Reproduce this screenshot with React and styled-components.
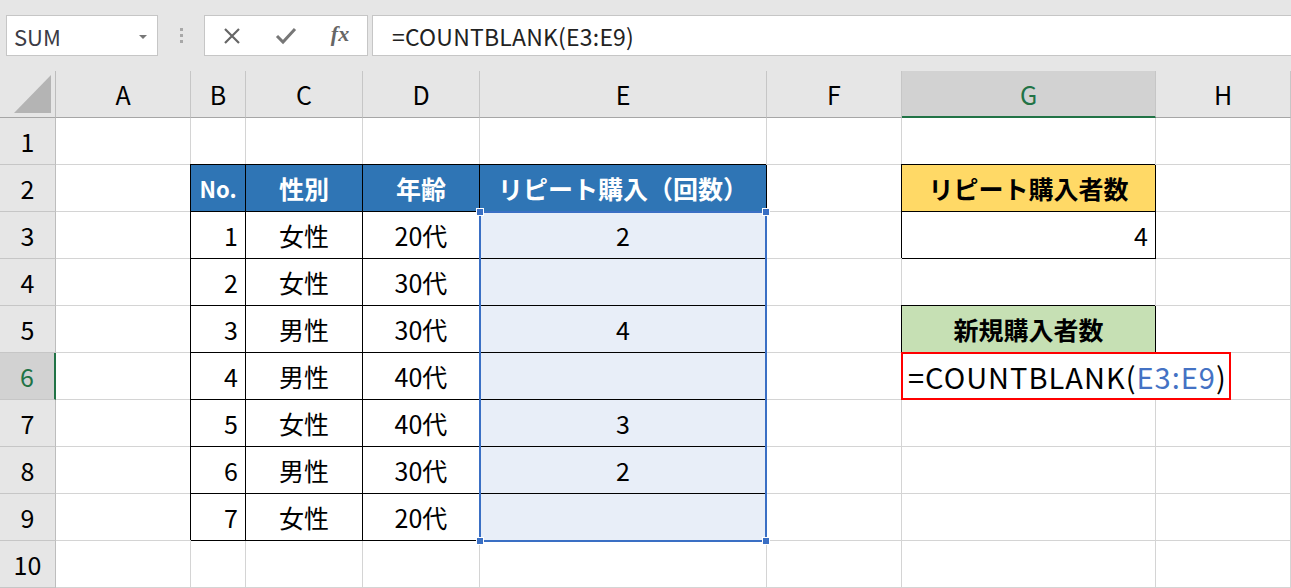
import React from "react";
import styled, { createGlobalStyle, css } from "styled-components";

const GlobalStyle = createGlobalStyle`
  html, body {
    margin: 0;
    padding: 0;
    background: #fff;
    overflow: hidden;
  }
  body {
    font-family: "Noto Sans CJK JP", "Noto Sans", sans-serif;
    color: #000;
  }
`;

const Page = styled.div`
  width: 1291px;
  height: 588px;
  overflow: hidden;
`;

const Toolbar = styled.div`
  height: 71px;
  background: #e6e6e6;
  display: flex;
  align-items: center;
  padding-left: 6px;
  box-sizing: border-box;
`;

const Field = styled.div`
  height: 41px;
  box-sizing: border-box;
  background: #fff;
  border: 1px solid #c6c6c6;
  display: flex;
  align-items: center;
`;

const NameBox = styled(Field)`
  width: 152px;
  padding: 0 10px 0 7px;
  justify-content: space-between;
  font-size: 22px;
  color: #3b3b45;
`;

const Caret = styled.span`
  width: 0;
  height: 0;
  border-left: 4px solid transparent;
  border-right: 4px solid transparent;
  border-top: 4px solid #777;
  margin-top: 2px;
`;

const Grip = styled.div`
  width: 46px;
  display: flex;
  flex-direction: column;
  align-items: center;
  gap: 3px;
  span {
    width: 3px;
    height: 3px;
    background: #a8a8a8;
  }
`;

const Buttons = styled(Field)`
  width: 164px;
  color: #666;
`;

const Slot = styled.div`
  width: 54px;
  display: flex;
  justify-content: center;
  align-items: center;
`;

const Fx = styled.span`
  font-family: "Liberation Serif", serif;
  font-style: italic;
  font-weight: bold;
  font-size: 22px;
  color: #666;
  margin-top: -3px;
`;

const FormulaBar = styled(Field)`
  flex: 1;
  margin-left: 4px;
  padding-left: 19px;
  font-size: 23px;
  letter-spacing: 0.2px;
  color: #222;
  border-right: none;
`;

const Sheet = styled.div`
  display: grid;
  grid-template-columns: 56px 135px 55px 117px 117px 287px 135px 254px 1fr;
  grid-auto-rows: 47px;
`;

const Base = styled.div`
  box-sizing: border-box;
  border-right: 1px solid #d4d4d4;
  border-bottom: 1px solid #d4d4d4;
  display: flex;
  align-items: center;
  font-size: 25px;
  white-space: nowrap;
`;

const Corner = styled(Base)`
  background: #e6e6e6;
  border-right-color: #bdbdbd;
  border-bottom-color: #a6a6a6;
  position: relative;
  &::after {
    content: "";
    position: absolute;
    left: 14px;
    top: 4px;
    right: 4px;
    bottom: 4px;
    background: #b4b4b4;
    clip-path: polygon(100% 0, 100% 100%, 0 100%);
  }
`;

const ColHead = styled(Base)`
  background: ${(p) => (p.$active ? "#d2d2d2" : "#e6e6e6")};
  border-right-color: #c6c6c6;
  border-bottom: ${(p) => (p.$active ? "2px solid #217346" : "1px solid #a6a6a6")};
  justify-content: center;
  color: ${(p) => (p.$active ? "#217346" : "#000")};
`;

const RowHead = styled(Base)`
  background: ${(p) => (p.$active ? "#d2d2d2" : "#e6e6e6")};
  border-right: ${(p) => (p.$active ? "2px solid #217346" : "1px solid #bdbdbd")};
  border-bottom-color: #c6c6c6;
  justify-content: center;
  color: ${(p) => (p.$active ? "#217346" : "#000")};
`;

const Cell = styled(Base)`
  justify-content: ${(p) =>
    p.$align === "right" ? "flex-end" : p.$align === "center" ? "center" : "flex-start"};
  padding: 0 7px;
  background: ${(p) => p.$fill || "transparent"};
  font-weight: ${(p) => (p.$bold ? 700 : 400)};
  font-size: ${(p) => p.$size || 25}px;
  color: ${(p) => p.$color || "#000"};
  ${(p) =>
    p.$boxed &&
    css`
      border-right-color: #000;
      border-bottom-color: #000;
      box-shadow: -1px -1px 0 #000;
    `}
  ${(p) =>
    p.$raised &&
    css`
      position: relative;
      z-index: 2;
    `}
`;

/* selection frame over E3:E9, hangs from the E3 cell */
const Selection = styled.div`
  position: absolute;
  left: -1px;
  top: -1px;
  width: 288px;
  height: ${47 * 7 + 2}px;
  box-sizing: border-box;
  border: 2px solid #3a6fc4;
  pointer-events: none;
`;

const Handle = styled.span`
  position: absolute;
  width: 6px;
  height: 6px;
  background: #3a6fc4;
  border: 1px solid #fff;
  ${(p) => (p.$top ? "top: -5px;" : "bottom: -5px;")}
  ${(p) => (p.$left ? "left: -5px;" : "right: -5px;")}
`;

/* in-cell editor of G6, spills over into H6 */
const Editor = styled.div`
  position: absolute;
  left: -1px;
  top: -1px;
  height: 48px;
  box-sizing: border-box;
  border: 2px solid #ff0000;
  background: #fff;
  display: flex;
  align-items: center;
  padding: 0 2px 0 5px;
  font-size: 29px;
  letter-spacing: 1px;
  white-space: nowrap;
`;

const Ref = styled.span`
  color: #4472c4;
`;

const columns = ["A", "B", "C", "D", "E", "F", "G", "H"];

const people = [
  [1, "女性", "20代", 2],
  [2, "女性", "30代", ""],
  [3, "男性", "30代", 4],
  [4, "男性", "40代", ""],
  [5, "女性", "40代", 3],
  [6, "男性", "30代", 2],
  [7, "女性", "20代", ""],
];

const BLUE = "#2f75b5";
const SELECT = "#e8eef8";

function Close() {
  return (
    <svg width="20" height="20" viewBox="0 0 20 20">
      <path d="M3 3 L17 17 M17 3 L3 17" stroke="#666" strokeWidth="2.2" fill="none" />
    </svg>
  );
}

function Check() {
  return (
    <svg width="22" height="20" viewBox="0 0 22 20">
      <path d="M2 10 L8 16 L20 3" stroke="#777" strokeWidth="3" fill="none" />
    </svg>
  );
}

function sideCells(row) {
  // F, G, H columns for a given sheet row
  if (row === 2)
    return (
      <>
        <Cell />
        <Cell $boxed $fill="#ffd966" $bold $align="center">
          リピート購入者数
        </Cell>
        <Cell />
      </>
    );
  if (row === 3)
    return (
      <>
        <Cell />
        <Cell $boxed $align="right">4</Cell>
        <Cell />
      </>
    );
  if (row === 5)
    return (
      <>
        <Cell />
        <Cell $boxed $fill="#c6e0b4" $bold $align="center">
          新規購入者数
        </Cell>
        <Cell />
      </>
    );
  if (row === 6)
    return (
      <>
        <Cell />
        <Cell $raised>
          <Editor>
            =COUNTBLANK(<Ref>E3:E9</Ref>)
          </Editor>
        </Cell>
        <Cell />
      </>
    );
  return (
    <>
      <Cell />
      <Cell />
      <Cell />
    </>
  );
}

function tableCells(row) {
  if (row === 2)
    return (
      <>
        <Cell $boxed $fill={BLUE} $bold $color="#fff" $align="center" $size={22}>
          No.
        </Cell>
        <Cell $boxed $fill={BLUE} $bold $color="#fff" $align="center">性別</Cell>
        <Cell $boxed $fill={BLUE} $bold $color="#fff" $align="center">年齢</Cell>
        <Cell $boxed $fill={BLUE} $bold $color="#fff" $align="center">
          リピート購入（回数）
        </Cell>
      </>
    );
  const p = people[row - 3];
  if (!p)
    return (
      <>
        <Cell />
        <Cell />
        <Cell />
        <Cell />
      </>
    );
  const first = row === 3;
  return (
    <>
      <Cell $boxed $align="right">{p[0]}</Cell>
      <Cell $boxed $align="center">{p[1]}</Cell>
      <Cell $boxed $align="center">{p[2]}</Cell>
      <Cell $boxed $align="center" $fill={SELECT} $raised={first}>
        {p[3]}
        {first && (
          <Selection>
            <Handle $top $left />
            <Handle $top />
            <Handle $left />
            <Handle />
          </Selection>
        )}
      </Cell>
    </>
  );
}

export default function App() {
  const rows = Array.from({ length: 10 }, (_, i) => i + 1);
  return (
    <Page>
      <GlobalStyle />
      <Toolbar>
        <NameBox>
          SUM
          <Caret />
        </NameBox>
        <Grip>
          <span />
          <span />
          <span />
        </Grip>
        <Buttons>
          <Slot>
            <Close />
          </Slot>
          <Slot>
            <Check />
          </Slot>
          <Slot>
            <Fx>fx</Fx>
          </Slot>
        </Buttons>
        <FormulaBar>=COUNTBLANK(E3:E9)</FormulaBar>
      </Toolbar>
      <Sheet>
        <Corner />
        {columns.map((c) => (
          <ColHead key={c} $active={c === "G"}>
            {c}
          </ColHead>
        ))}
        {rows.map((r) => (
          <React.Fragment key={r}>
            <RowHead $active={r === 6}>{r}</RowHead>
            <Cell />
            {tableCells(r)}
            {sideCells(r)}
          </React.Fragment>
        ))}
      </Sheet>
    </Page>
  );
}
